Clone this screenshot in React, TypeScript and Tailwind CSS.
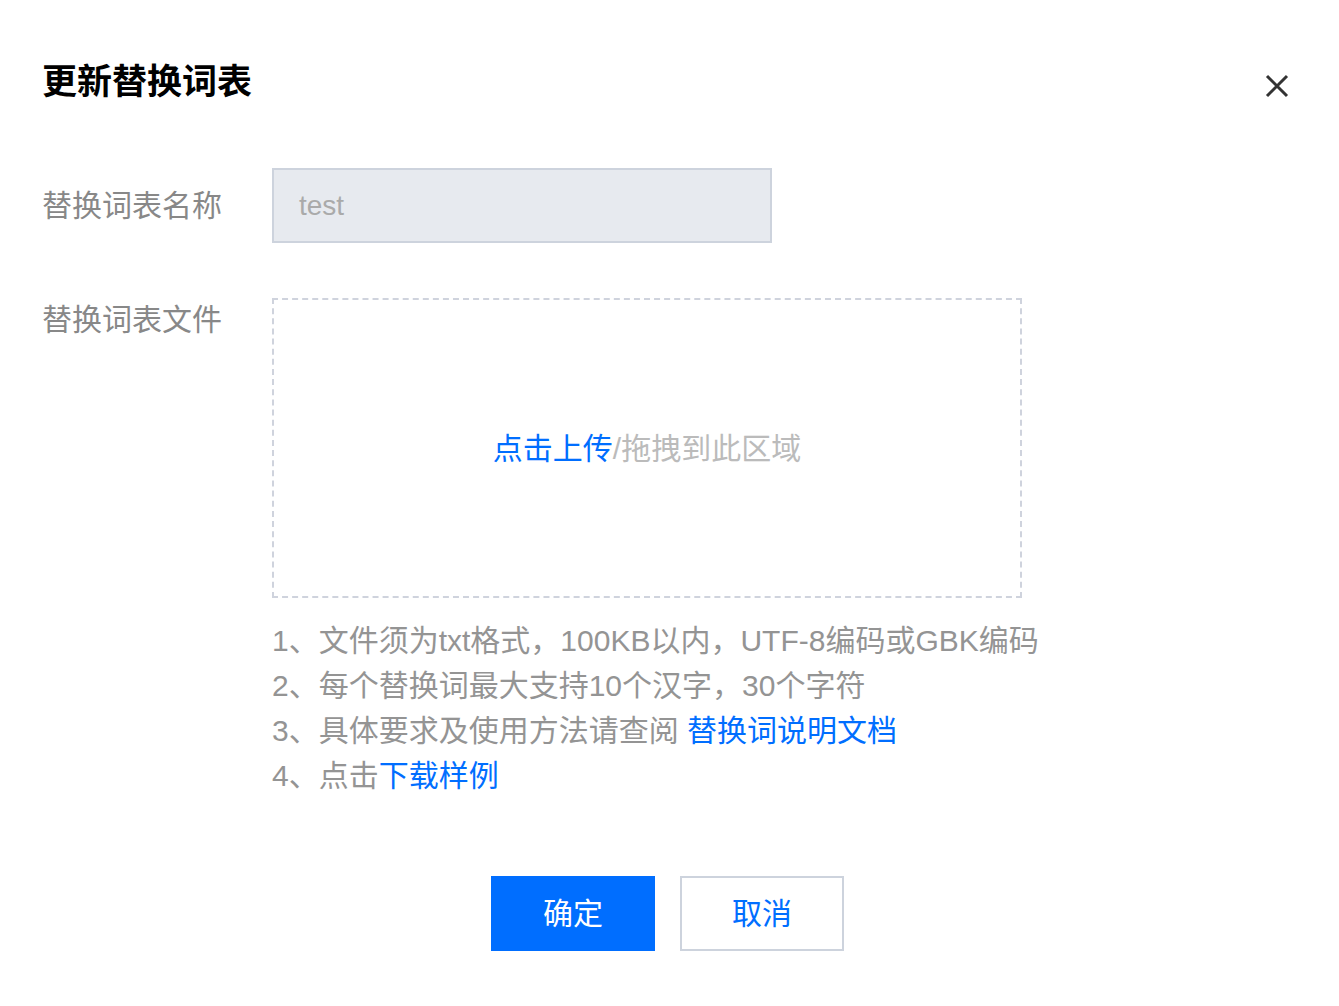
import React from "react";

export default function App() {
  const font = { fontFamily: '"Liberation Sans", "Noto Sans CJK SC", sans-serif' };
  return (
    <div className="w-[1339px] h-[1006px] bg-white pl-[42px] pr-[44px] pt-[58px]" style={font}>
      <div className="flex items-center justify-between">
        <h1 className="text-[35px] leading-[48px] font-bold text-black">更新替换词表</h1>
        <button className="w-[36px] h-[36px] flex items-center justify-center mt-[8px]">
          <svg width="24" height="24" viewBox="0 0 24 24" fill="none">
            <path d="M2 2L22 22M22 2L2 22" stroke="#333" strokeWidth="3" strokeLinecap="butt" />
          </svg>
        </button>
      </div>

      <div className="flex items-center mt-[62px]">
        <div className="w-[230px] text-[30px] leading-[44px] text-[#888]">替换词表名称</div>
        <div className="w-[500px] h-[75px] bg-[#e7eaef] border-2 border-[#cdd3dd] flex items-center pl-[25px] text-[28px] text-[#aaa]">
          test
        </div>
      </div>

      <div className="flex items-start mt-[55px]">
        <div className="w-[230px] text-[30px] leading-[44px] text-[#888]">替换词表文件</div>
        <div>
          <div className="w-[750px] h-[300px] border-2 border-dashed border-[#cfd3dd] flex items-center justify-center text-[30px]">
            <span className="text-[#006eff]">点击上传</span>
            <span className="text-[#bbb]">/拖拽到此区域</span>
          </div>
          <div className="mt-[20px] text-[30px] leading-[45px] text-[#949494] whitespace-nowrap">
            <div>1、文件须为txt格式，100KB以内，UTF-8编码或GBK编码</div>
            <div>2、每个替换词最大支持10个汉字，30个字符</div>
            <div>
              3、具体要求及使用方法请查阅 <span className="text-[#006eff]">替换词说明文档</span>
            </div>
            <div>
              4、点击<span className="text-[#006eff]">下载样例</span>
            </div>
          </div>
        </div>
      </div>

      <div className="flex justify-center gap-[25px] mt-[78px] pr-[2px]">
        <button className="w-[164px] h-[75px] bg-[#006eff] text-white text-[30px]">确定</button>
        <button className="w-[164px] h-[75px] bg-white border-2 border-[#cdd3dd] text-[#006eff] text-[30px]">取消</button>
      </div>
    </div>
  );
}
